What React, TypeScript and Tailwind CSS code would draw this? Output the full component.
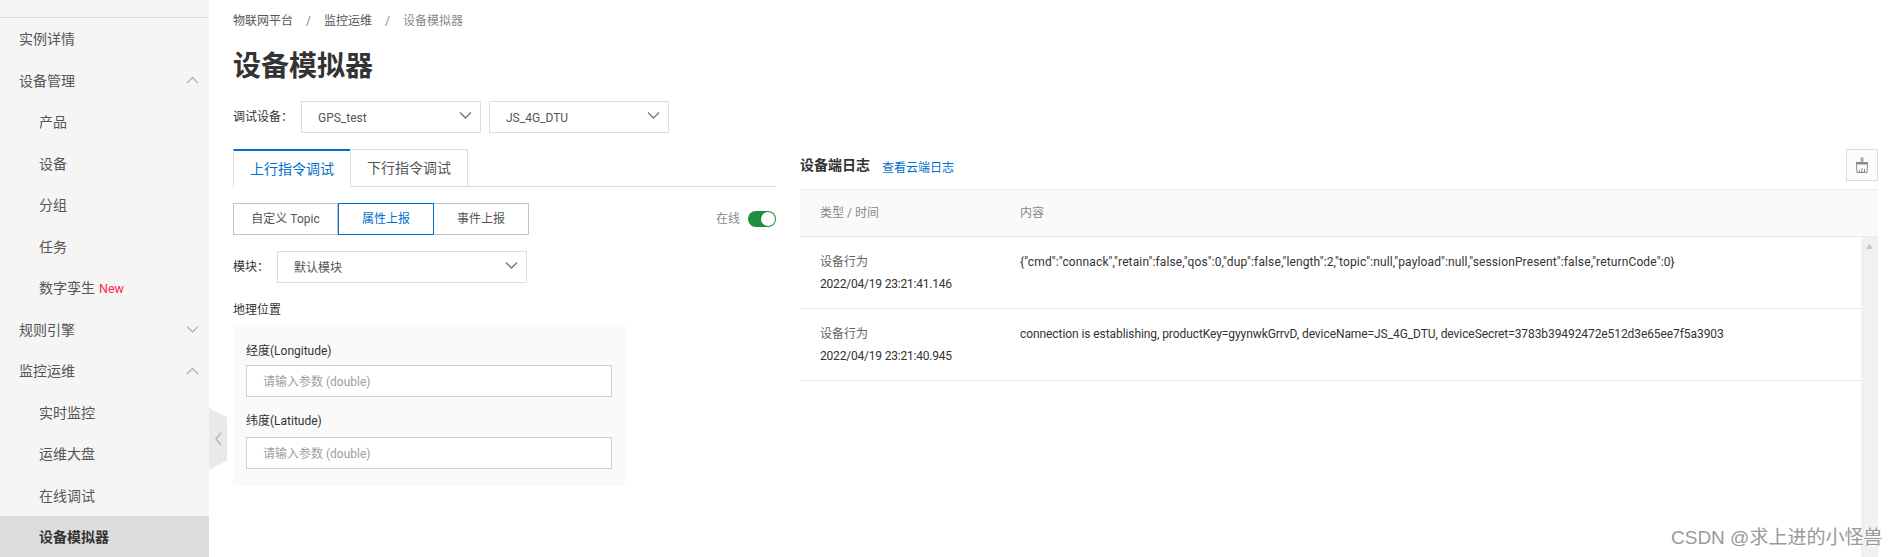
import React from "react";

const FONT = 'Roboto, "Noto Sans CJK SC", sans-serif';

function Chevron({ dir, className }: { dir: "up" | "down" | "left"; className?: string }) {
  const d = dir === "up" ? "M1 8 L6.5 2.5 L12 8" : dir === "down" ? "M1 2.5 L6.5 8 L12 2.5" : "M7 1 L2 7 L7 13";
  const w = dir === "left" ? 9 : 13;
  const h = dir === "left" ? 14 : 10;
  return (
    <svg width={w} height={h} viewBox={`0 0 ${w} ${h}`} fill="none" className={className}>
      <path d={d} stroke="currentColor" strokeWidth="1.4" />
    </svg>
  );
}

function NavRow({ label, sub, open, active, badge }: { label: string; sub?: boolean; open?: boolean; active?: boolean; badge?: boolean }) {
  return (
    <div
      className={`h-[41.5px] flex items-center justify-between pr-[10px] text-[14px] ${sub ? "pl-[39px]" : "pl-[19px]"} ${
        active ? "bg-[#dddddd] text-[#333333] font-bold" : "text-[#555555]"
      }`}
    >
      <span className="pt-[2px]">
        {label}
        {badge && <span className="ml-1 text-[12.5px] text-[#ff1f4b]">New</span>}
      </span>
      {open !== undefined && <Chevron dir={open ? "up" : "down"} className="text-[#b4b4b4]" />}
    </div>
  );
}

function Select({ value, className }: { value: string; className: string }) {
  return (
    <div className={`h-[32px] border border-[#dcdcdc] flex items-center justify-between pl-[16px] pr-[8px] text-[12px] text-[#555555] ${className}`}>
      <span className="pt-[1px]">{value}</span>
      <Chevron dir="down" className="text-[#777777] -mt-1" />
    </div>
  );
}

function ParamInput() {
  return (
    <div className="h-[32px] border border-[#d0d0d0] bg-white flex items-center pl-[16px] text-[12px] text-[#a0a0a0]">
      <span className="pt-[1px]">请输入参数 (double)</span>
    </div>
  );
}

function LogRow({ time, content, spacing }: { time: string; content: string; spacing: string }) {
  return (
    <div className="h-[72px] border-b border-[#ebebeb] flex text-[12px] pt-[14px]">
      <div className="w-[220px] pl-[20px] shrink-0">
        <div className="h-[22px] leading-[22px] text-[#666666]">设备行为</div>
        <div className="h-[22px] leading-[22px] text-[#333333] tracking-[-0.2px]">{time}</div>
      </div>
      <div className={`h-[22px] leading-[22px] text-[#333333] whitespace-nowrap ${spacing}`}>{content}</div>
    </div>
  );
}

export default function App() {
  return (
    <div className="relative h-[557px] overflow-hidden flex bg-white" style={{ fontFamily: FONT }}>
      <aside className="w-[209px] shrink-0 bg-[#f5f5f5] pt-[17px]">
        <div className="border-t border-[#dddddd]">
          <NavRow label="实例详情" />
          <NavRow label="设备管理" open />
          <NavRow label="产品" sub />
          <NavRow label="设备" sub />
          <NavRow label="分组" sub />
          <NavRow label="任务" sub />
          <NavRow label="数字孪生" sub badge />
          <NavRow label="规则引擎" open={false} />
          <NavRow label="监控运维" open />
          <NavRow label="实时监控" sub />
          <NavRow label="运维大盘" sub />
          <NavRow label="在线调试" sub />
          <NavRow label="设备模拟器" sub active />
        </div>
      </aside>

      <div className="absolute left-[209px] top-[408px] w-[18px] h-[62px] bg-[#e9e9e9] [clip-path:polygon(0_0,100%_15%,100%_85%,0_100%)] flex items-center justify-center text-[#b8b8b8]">
        <Chevron dir="left" />
      </div>

      <main className="flex-1 pl-[24px] pr-[20px] min-w-0">
        <nav className="h-[42px] flex items-center text-[12px] text-[#555555]">
          <span>物联网平台</span>
          <span className="mx-[13px] text-[#888888]">/</span>
          <span>监控运维</span>
          <span className="mx-[13px] text-[#888888]">/</span>
          <span className="text-[#888888]">设备模拟器</span>
        </nav>
        <h1 className="h-[48px] leading-[48px] text-[28px] font-bold text-[#333333] pt-[1px]">设备模拟器</h1>

        <div className="flex items-center h-[32px] mt-[11px] text-[12px] text-[#333333]">
          <span className="w-[68px]">调试设备：</span>
          <Select value="GPS_test" className="w-[180px]" />
          <Select value="JS_4G_DTU" className="w-[180px] ml-[8px]" />
        </div>

        <div className="flex gap-[24px] mt-[16px]">
          <section className="w-[543px] shrink-0">
            <div className="flex h-[38px] border-b border-[#dcdcdc] text-[14px]">
              <div className="w-[117px] h-[38px] border-t-2 border-t-[#0070cc] border-l border-l-[#dcdcdc] flex items-center justify-center text-[#0070cc] bg-white">
                上行指令调试
              </div>
              <div className="w-[118px] h-[37px] border border-b-0 border-[#dcdcdc] flex items-center justify-center text-[#555555]">
                下行指令调试
              </div>
            </div>

            <div className="flex items-center justify-between mt-[16px] text-[12px]">
              <div className="flex h-[32px] text-[#555555]">
                <div className="w-[105px] border border-[#c4c4c4] flex items-center justify-center">自定义 Topic</div>
                <div className="w-[96px] border border-[#0070cc] flex items-center justify-center text-[#0070cc]">属性上报</div>
                <div className="w-[95px] border border-l-0 border-[#c4c4c4] flex items-center justify-center">事件上报</div>
              </div>
              <div className="flex items-center text-[#888888]">
                <span className="mr-[8px]">在线</span>
                <span className="w-[28px] h-[16px] rounded-full bg-[#1e8e3e] flex justify-end items-center pr-[1px]">
                  <span className="w-[14px] h-[14px] rounded-full bg-white" />
                </span>
              </div>
            </div>

            <div className="flex items-center h-[32px] mt-[16px] text-[12px] text-[#333333]">
              <span className="w-[44px]">模块：</span>
              <Select value="默认模块" className="w-[250px]" />
            </div>

            <div className="mt-[17px] h-[18px] leading-[18px] text-[12px] text-[#333333] pt-[1px]">地理位置</div>
            <div className="mt-[7px] w-[392px] h-[161px] bg-[#fafafa] px-[13px] pt-[15px] text-[12px] text-[#333333]">
              <div className="h-[20px] leading-[20px] mb-[5px] pt-[1px]">经度(Longitude)</div>
              <ParamInput />
              <div className="h-[20px] leading-[20px] mt-[13px] mb-[7px] pt-[1px]">纬度(Latitude)</div>
              <ParamInput />
            </div>
          </section>

          <section className="flex-1 min-w-0">
            <div className="flex items-start justify-between h-[40px]">
              <div className="flex items-start">
                <span className="mt-[6px] leading-[20px] text-[14px] font-bold text-[#333333]">设备端日志</span>
                <span className="ml-[12px] mt-[9px] leading-[20px] text-[12px] text-[#0070cc]">查看云端日志</span>
              </div>
              <div className="w-[32px] h-[32px] border border-[#dcdcdc] bg-[#fcfcfc] flex items-center justify-center text-[#8a8a8a]">
                <svg width="14" height="16" viewBox="0 0 14 16" fill="none" stroke="currentColor" strokeWidth="1">
                  <path d="M5.5 0.5h3v4.5h-3z" fill="currentColor" stroke="none" opacity="0.7" />
                  <path d="M1 5h12v2.5H1z" fill="currentColor" stroke="none" />
                  <path d="M1.5 7.5l0.5 8h10l0.5-8" />
                  <path d="M4.5 15v-2M7 15v-4M9.5 15v-3" />
                </svg>
              </div>
            </div>
            <div className="h-[48px] bg-[#fafafa] border-y border-[#ebebeb] flex items-center text-[12px] text-[#888888]">
              <span className="w-[220px] pl-[20px]">类型 / 时间</span>
              <span>内容</span>
            </div>
            <div className="flex h-[400px]">
              <div className="flex-1 min-w-0">
                <LogRow
                  time="2022/04/19 23:21:41.146"
                  spacing="tracking-[0.13px]"
                  content={'{"cmd":"connack","retain":false,"qos":0,"dup":false,"length":2,"topic":null,"payload":null,"sessionPresent":false,"returnCode":0}'}
                />
                <LogRow
                  time="2022/04/19 23:21:40.945"
                  spacing="tracking-[-0.08px]"
                  content="connection is establishing, productKey=gyynwkGrrvD, deviceName=JS_4G_DTU, deviceSecret=3783b39492472e512d3e65ee7f5a3903"
                />
              </div>
              <div className="w-[17px] shrink-0 bg-[#f1f1f1] flex justify-center pt-[7px]">
                <svg width="7" height="5" viewBox="0 0 7 5"><path d="M3.5 0L7 5H0z" fill="#c4c4c4" /></svg>
              </div>
            </div>
          </section>
        </div>
      </main>

      <div className="absolute left-[1671px] top-[526px] text-[19px] leading-[24px] text-[#999999] whitespace-nowrap [text-shadow:1px_1px_1px_#ffffff]" style={{ fontFamily: '"Liberation Sans", "Noto Sans CJK SC", sans-serif' }}>
        CSDN @求上进的小怪兽
      </div>
    </div>
  );
}
